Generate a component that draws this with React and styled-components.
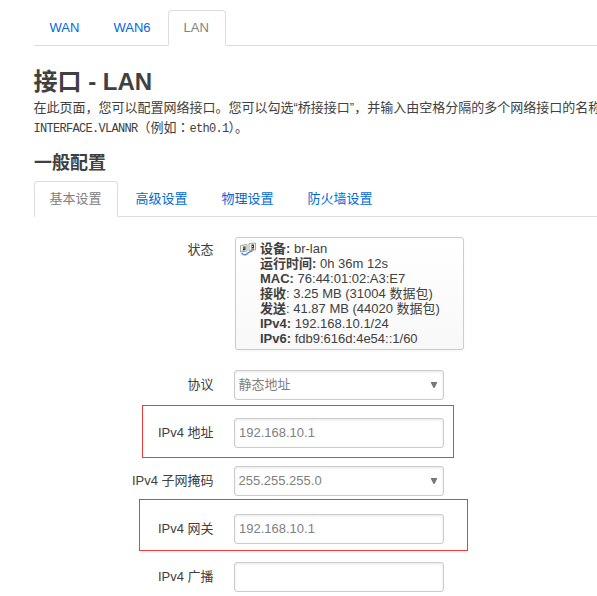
import React from 'react';
import styled, { createGlobalStyle, css } from 'styled-components';

const GlobalStyle = createGlobalStyle`
  * { box-sizing: border-box; }
  body {
    margin: 0;
    background: #fff;
    color: #404040;
    font: 13px/18px "Liberation Sans", Arial, "Noto Sans CJK SC", sans-serif;
    overflow: hidden;
  }
`;

const Page = styled.main`
  width: 597px;
  height: 596px;
  padding: 10px 0 0 34px;
  overflow: hidden;
`;

const Tabs = styled.nav`
  display: flex;
  height: 36px;
  border-bottom: 1px solid #ddd;
`;

const Tab = styled.a`
  flex: none;
  width: ${(p) => p.$width}px;
  height: 36px;
  margin-right: 2px;
  padding-left: 14.5px;
  border: 1px solid transparent;
  border-radius: 4px 4px 0 0;
  line-height: 33px;
  white-space: nowrap;
  color: #0069d6;
  text-decoration: none;
  ${(p) => p.$active && css`
    color: #808080;
    background: #fff;
    border-color: #ddd;
    border-bottom-color: #fff;
  `}
`;

const Title = styled.h2`
  margin: 18px 0 0 -0.5px;
  font-size: 24px;
  line-height: 36px;
  height: 35px;
`;

const Description = styled.p`
  margin: 0 0 0 -0.5px;
  width: 620px;
  height: 37px;
  line-height: 18.5px;
  white-space: nowrap;
`;

const Code = styled.span`
  font: 12px "Liberation Mono", monospace;
  letter-spacing: -0.7px;
`;

const Centered = styled.span`
  font-family: "Noto Sans CJK JP", sans-serif;
`;

const SectionTitle = styled.h3`
  margin: 9px 0 0;
  height: 36px;
  font-size: 18px;
  line-height: 37px;
`;

const Form = styled.form`
  display: flex;
  flex-direction: column;
  gap: 18px;
  padding-top: 20px;
`;

const Row = styled.div`
  position: relative;
  display: flex;
  align-items: flex-start;
`;

const Label = styled.label`
  width: 179.5px;
  margin-right: 20.5px;
  padding-top: ${(p) => (p.$raised ? 3 : 5)}px;
  text-align: right;
  line-height: 20px;
`;

const StatusBox = styled.div`
  display: flex;
  width: 229px;
  height: 113px;
  margin: 0 0 2px 1px;
  padding: 3px 0 0 4px;
  border: 1px solid #ccc;
  border-radius: 3px;
  background: linear-gradient(#fff, #f8f8f8);
  box-shadow: 0 1px 2px rgba(0, 0, 0, 0.05);
`;

const StatusLines = styled.div`
  margin-left: 4px;
`;

const StatusLine = styled.div`
  height: 15px;
  line-height: 15px;
  white-space: nowrap;
`;

const fieldStyle = css`
  width: 210px;
  height: 30px;
  border: 1px solid #ccc;
  border-radius: 3px;
  background: #fff;
  color: #808080;
  font: inherit;
  box-shadow: inset 0 1px 3px rgba(0, 0, 0, 0.1);
  outline: none;
`;

const Input = styled.input`
  ${fieldStyle}
  padding: 0 4px 1px;
`;

const Select = styled.div`
  ${fieldStyle}
  display: flex;
  align-items: center;
  justify-content: space-between;
  padding: 0 6px 1px 3.5px;
`;

const Highlight = styled.div`
  position: absolute;
  left: ${(p) => p.$left}px;
  top: ${(p) => p.$top}px;
  width: ${(p) => p.$width}px;
  height: ${(p) => p.$height}px;
  border: 1px solid #fb3737;
  pointer-events: none;
`;

const BridgeIcon = () => (
  <svg width="16" height="16" viewBox="0 0 16 16" fill="none">
    <path d="M.5 4.5 7 3.5v6.5L.5 11zM9 2.5 15.5 2v7L9 9.5z" fill="#f2f3ee" stroke="#a4aaa2" />
    <path d="M3 5.5h2.5V9H3zM11.5 3.5H14v4h-2.5z" fill="#303531" />
    <path d="M3.5 6.5h1v1h-1zM12 5h1v1h-1z" fill="#dde1d9" />
    <path d="M2 10h3M11 8.5h3" stroke="#838b83" />
    <path d="M1.5 12c2 2.3 4.3 2.5 6 .5s2.5-1.5 5-2.5" stroke="#5a8dd4" strokeWidth="1.5" />
  </svg>
);

const Arrow = () => (
  <svg width="6" height="6" viewBox="0 0 6 6">
    <path d="M0 0h6v1L3.5 6h-1L0 1z" fill="#777" />
  </svg>
);

const interfaces = [
  { name: 'WAN', width: 62 },
  { name: 'WAN6', width: 68 },
  { name: 'LAN', width: 58, active: true },
];

const sections = ['基本设置', '高级设置', '物理设置', '防火墙设置'];

const status = [
  ['设备:', 'br-lan'],
  ['运行时间:', '0h 36m 12s'],
  ['MAC:', '76:44:01:02:A3:E7'],
  ['接收', '3.25 MB (31004 数据包)', ':'],
  ['发送', '41.87 MB (44020 数据包)', ':'],
  ['IPv4:', '192.168.10.1/24'],
  ['IPv6:', 'fdb9:616d:4e54::1/60'],
];

const fields = [
  { label: '协议', value: '静态地址', select: true },
  { label: 'IPv4 地址', value: '192.168.10.1', mark: { $left: 108, $top: -13, $width: 312, $height: 53 } },
  { label: 'IPv4 子网掩码', value: '255.255.255.0', select: true },
  { label: 'IPv4 网关', value: '192.168.10.1', mark: { $left: 105, $top: -15, $width: 329, $height: 52 } },
  { label: 'IPv4 广播', value: '' },
];

export default function App() {
  return (
    <Page>
      <GlobalStyle />
      <Tabs>
        {interfaces.map((t) => (
          <Tab key={t.name} $width={t.width} $active={t.active}>{t.name}</Tab>
        ))}
      </Tabs>
      <Title>接口 - LAN</Title>
      <Description>
        在此页面，您可以配置网络接口。您可以勾选“桥接接口”，并输入由空格分隔的多个网络接口的名称
        <br />
        <Code>INTERFACE.VLANNR</Code>（例如<Centered>：</Centered><Code>eth0.1</Code><Centered>）。</Centered>
      </Description>
      <SectionTitle>一般配置</SectionTitle>
      <Tabs>
        {sections.map((name, i) => (
          <Tab key={name} $width={name.length * 13 + 32} $active={i === 0}>{name}</Tab>
        ))}
      </Tabs>
      <Form>
        <Row>
          <Label $raised>状态</Label>
          <StatusBox>
            <BridgeIcon />
            <StatusLines>
              {status.map(([name, value, suffix]) => (
                <StatusLine key={name}><b>{name}</b>{suffix} {value}</StatusLine>
              ))}
            </StatusLines>
          </StatusBox>
        </Row>
        {fields.map((f) => (
          <Row key={f.label}>
            <Label>{f.label}</Label>
            {f.select
              ? <Select>{f.value}<Arrow /></Select>
              : <Input defaultValue={f.value} />}
            {f.mark && <Highlight {...f.mark} />}
          </Row>
        ))}
      </Form>
    </Page>
  );
}
